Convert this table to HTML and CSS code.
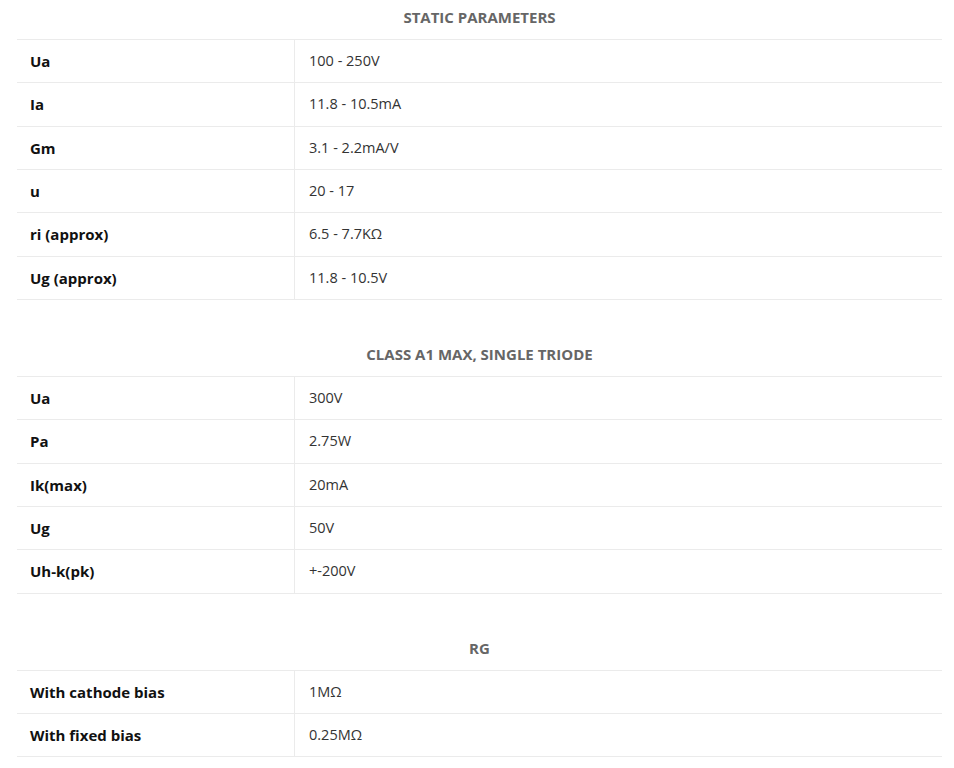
FILE: index.html
```html
<!DOCTYPE html>
<html>
<head>
<meta charset="utf-8">
<link rel="stylesheet" href="styles.css">
</head>
<body>
<div class="page">
  <table class="spec">
    <caption>STATIC PARAMETERS</caption>
    <tr><th>Ua</th><td>100 - 250V</td></tr>
    <tr><th>Ia</th><td>11.8 - 10.5mA</td></tr>
    <tr><th>Gm</th><td>3.1 - 2.2mA/V</td></tr>
    <tr><th>u</th><td>20 - 17</td></tr>
    <tr><th>ri (approx)</th><td>6.5 - 7.7KΩ</td></tr>
    <tr><th>Ug (approx)</th><td>11.8 - 10.5V</td></tr>
  </table>
  <table class="spec">
    <caption>CLASS A1 MAX, SINGLE TRIODE</caption>
    <tr><th>Ua</th><td>300V</td></tr>
    <tr><th>Pa</th><td>2.75W</td></tr>
    <tr><th>Ik(max)</th><td>20mA</td></tr>
    <tr><th>Ug</th><td>50V</td></tr>
    <tr><th>Uh-k(pk)</th><td>+-200V</td></tr>
  </table>
  <table class="spec">
    <caption>RG</caption>
    <tr><th>With cathode bias</th><td>1MΩ</td></tr>
    <tr><th>With fixed bias</th><td>0.25MΩ</td></tr>
  </table>
</div>
</body>
</html>
```
FILE: styles.css
```css
html, body {
  margin: 0;
  padding: 0;
  background: #fff;
}
.page {
  padding: 0 12px 0 17px;
  font-family: "Open Sans", "Liberation Sans", sans-serif;
  font-size: 14px;
  color: #333;
}
.spec {
  width: 925px;
  border-collapse: collapse;
  margin-bottom: 37px;
}
.spec caption {
  font-size: 15px;
  font-weight: 700;
  color: #666;
  line-height: 20px;
  padding: 7px 0 12px;
  text-align: center;
}
.spec th, .spec td {
  border-top: 1px solid #ebebeb;
  border-bottom: 1px solid #ebebeb;
  padding: 11px 13px;
  line-height: 20.33px;
  text-align: left;
  vertical-align: middle;
}
.spec th {
  width: 30%;
  font-size: 15px;
  font-weight: 700;
  color: #111;
  border-right: 1px solid #ebebeb;
  box-sizing: border-box;
}
.spec td {
  font-size: 14.5px;
  font-weight: 400;
  color: #333;
  padding-left: 14px;
}
```
